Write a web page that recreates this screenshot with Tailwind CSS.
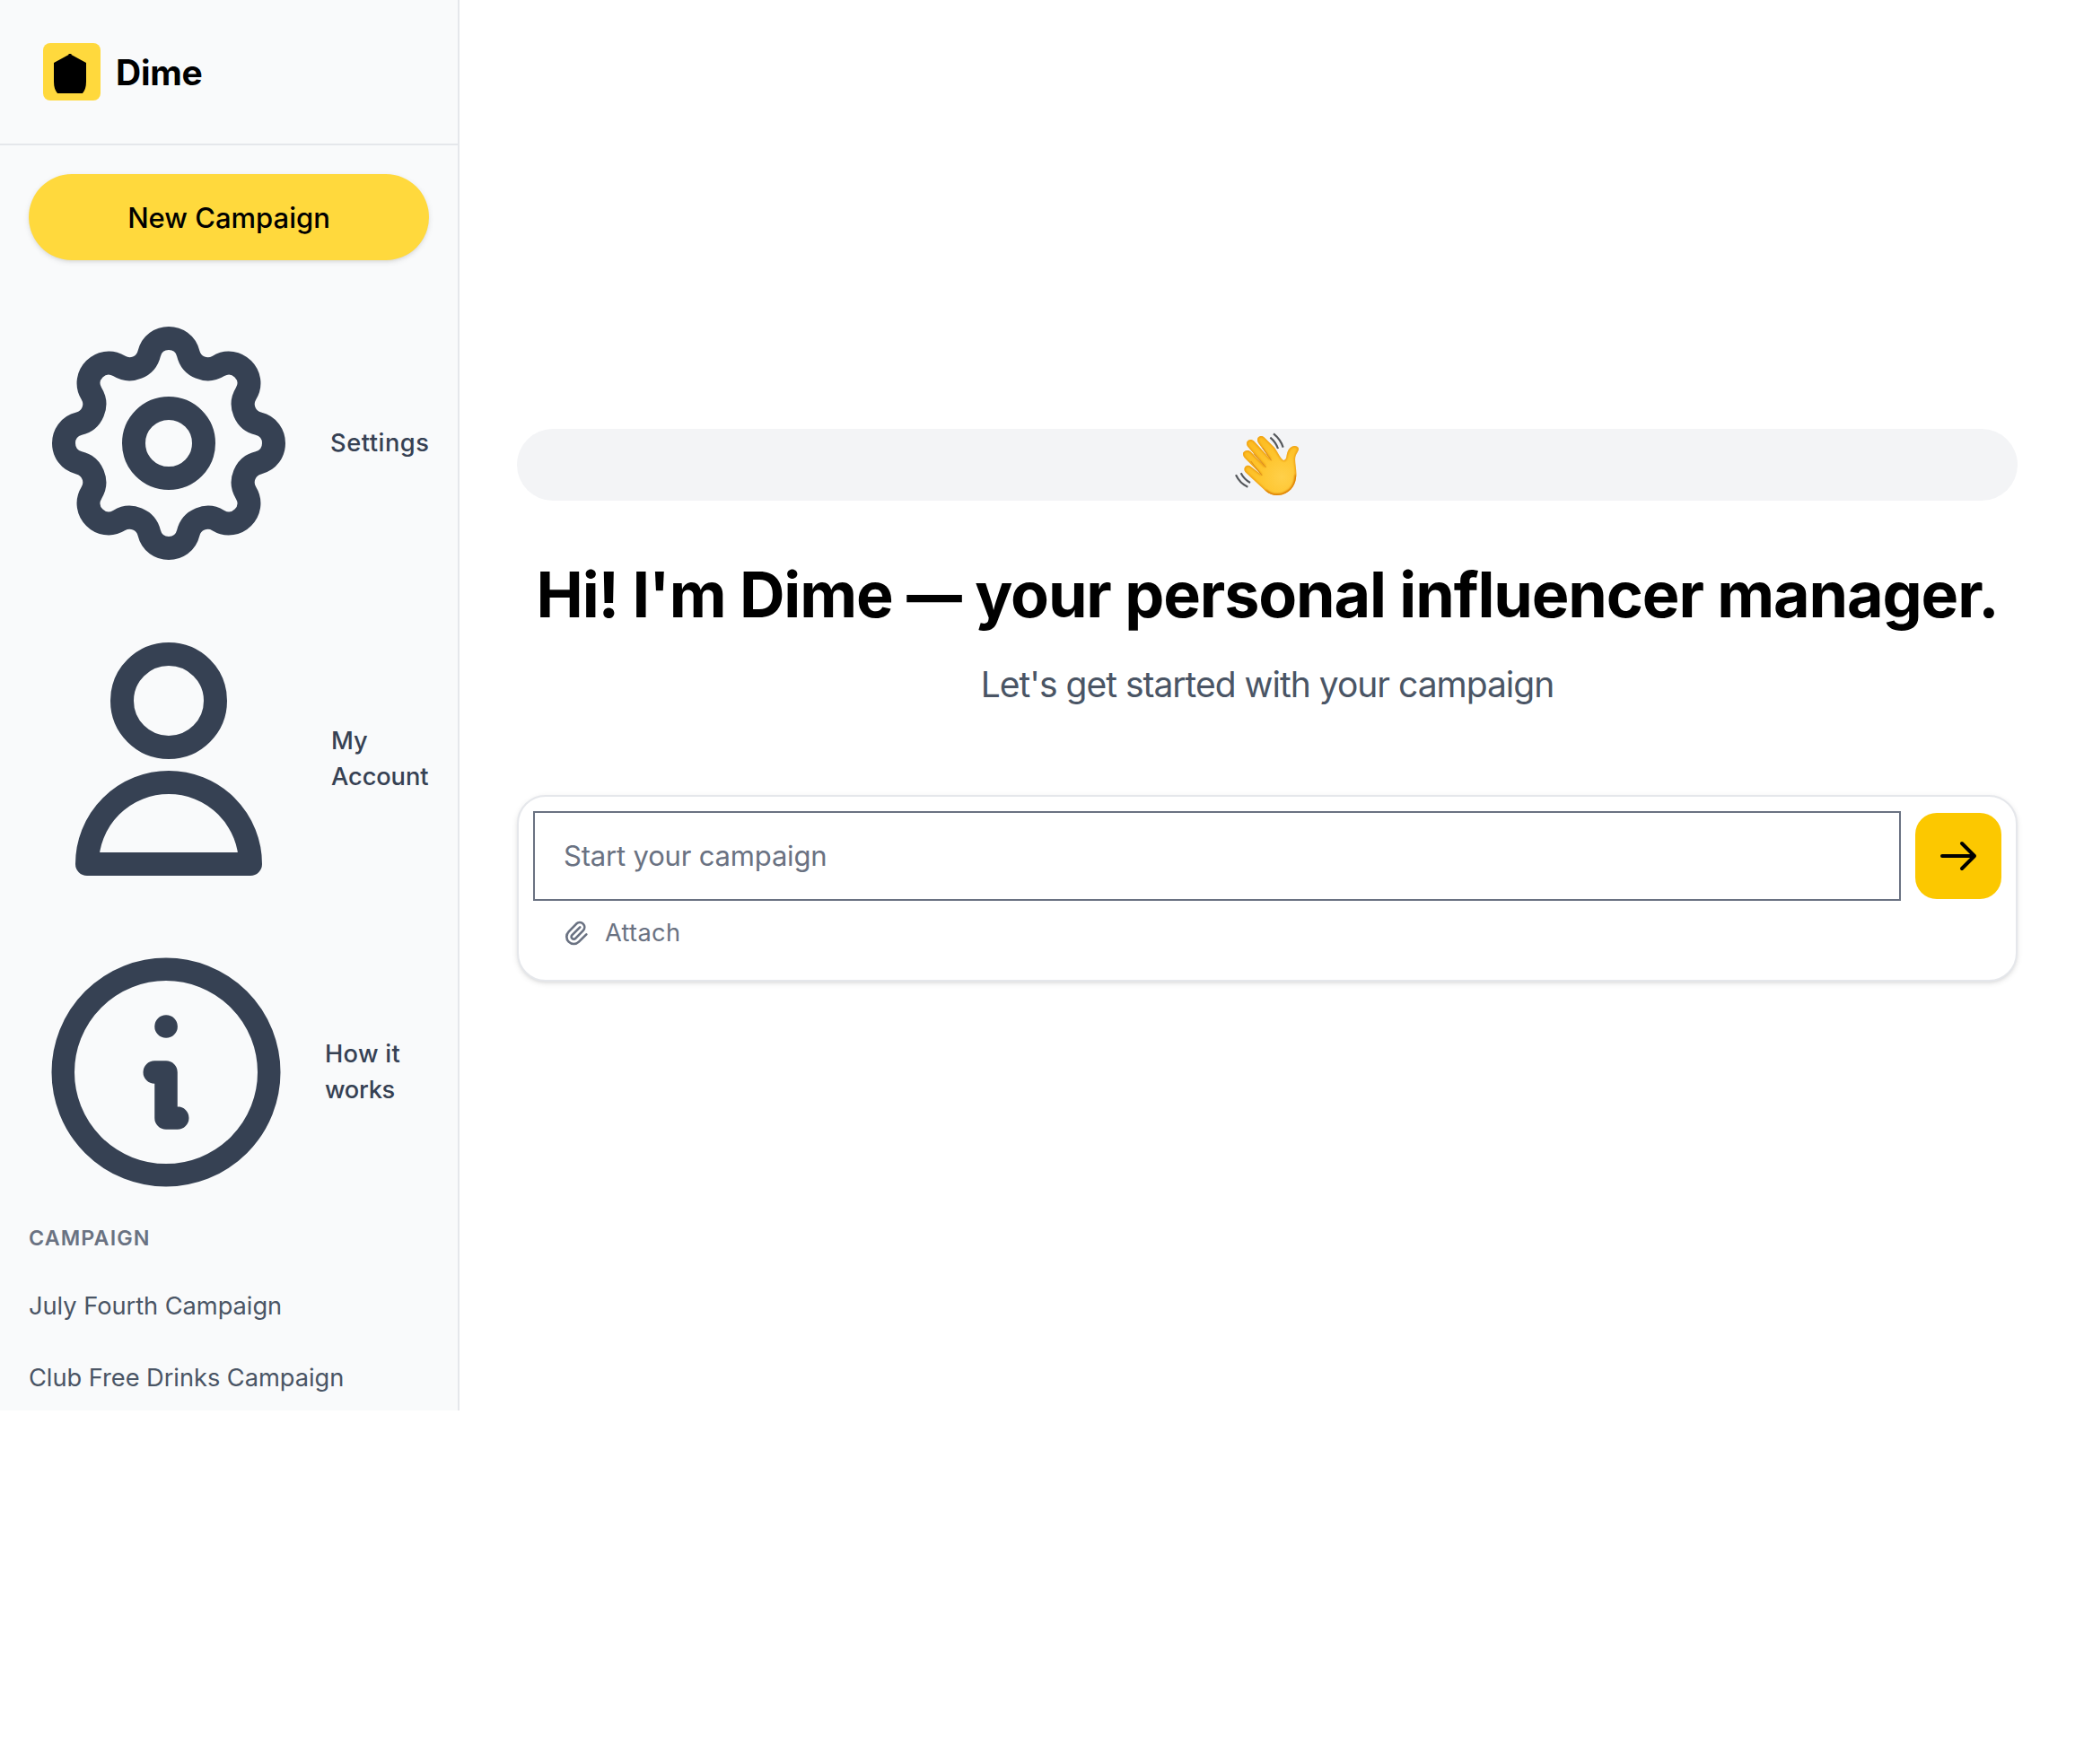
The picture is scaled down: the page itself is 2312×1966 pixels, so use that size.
<!DOCTYPE html>
<html lang="en">
<head>
<meta charset="utf-8">
<title>Dime</title>
<script src="https://cdn.jsdelivr.net/npm/@tailwindcss/browser@4"></script>
</head>
<body class="bg-white font-['Inter',sans-serif] text-black">
<div class="flex h-[1572px]">
  <aside class="flex w-[512px] shrink-0 flex-col border-r-2 border-[#e5e7eb] bg-[#f9fafb]">
    <header class="flex h-[162px] shrink-0 items-center gap-[17px] border-b-2 border-[#e5e7eb] px-12">
      <svg class="size-16 shrink-0" viewBox="0 0 64 64">
        <rect width="64" height="64" rx="8" fill="#ffd93d"/>
        <path d="M28.5 12h3v1L48 22v21c0 6-1.500 10-4 13H16c-2.500-3-4-7-4-13V22l16.500-9z" fill="#000"/>
      </svg>
      <span class="pt-0.5 text-[39px] leading-[56px] font-bold tracking-[-0.27px]">Dime</span>
    </header>

    <div class="flex flex-col px-8 pt-8">
      <button class="h-24 w-full rounded-full bg-[#ffd93d] pt-px text-[31px] leading-[48px] font-medium shadow-[0_2px_6px_rgba(0,0,0,0.1),0_2px_4px_-2px_rgba(0,0,0,0.1)]">New Campaign</button>

      <nav class="mt-12 flex flex-col gap-10 text-[27.25px] leading-10 font-medium text-[#364153]">
        <a class="flex items-center gap-6">
          <svg class="size-[312px] shrink-0" viewBox="0 0 24 24" fill="none" stroke="currentColor" stroke-width="2" stroke-linecap="round" stroke-linejoin="round">
            <path d="M10.325 4.317c.426-1.756 2.924-1.756 3.35 0a1.724 1.724 0 002.573 1.066c1.543-.94 3.310.826 2.370 2.370a1.724 1.724 0 001.065 2.572c1.756.426 1.756 2.924 0 3.350a1.724 1.724 0 00-1.066 2.573c.94 1.543-.826 3.310-2.370 2.370a1.724 1.724 0 00-2.572 1.065c-.426 1.756-2.924 1.756-3.350 0a1.724 1.724 0 00-2.573-1.066c-1.543.94-3.310-.826-2.370-2.370a1.724 1.724 0 00-1.065-2.572c-1.756-.426-1.756-2.924 0-3.350a1.724 1.724 0 001.066-2.573c-.94-1.543.826-3.310 2.370-2.370.996.608 2.296.07 2.572-1.065z"/>
            <path d="M15 12a3 3 0 11-6 0 3 3 0 016 0z"/>
          </svg>
          <span class="tracking-[0.53px]">Settings</span>
        </a>
        <a class="flex items-center gap-6">
          <svg class="size-[312px] shrink-0" viewBox="0 0 24 24" fill="none" stroke="currentColor" stroke-width="2" stroke-linecap="round" stroke-linejoin="round">
            <path d="M16 7a4 4 0 11-8 0 4 4 0 018 0zM12 14a7 7 0 00-7 7h14a7 7 0 00-7-7z"/>
          </svg>
          <span class="pl-px tracking-[-0.1px]">My<br>Account</span>
        </a>
        <a class="flex items-center gap-6">
          <svg class="size-[306px] shrink-0" viewBox="0 0 24 24" fill="none" stroke="currentColor" stroke-width="2" stroke-linecap="round" stroke-linejoin="round">
            <path d="M13 16h-1v-4h-1m1-4h.01M21 12a9 9 0 11-18 0 9 9 0 0118 0z"/>
          </svg>
          <span><span class="tracking-[0.3px]">How it</span><br><span class="tracking-[-0.3px]">works</span></span>
        </a>
      </nav>

      <h2 class="mt-4 text-[23.3px] leading-8 font-semibold tracking-[1.1px] text-[#6a7282]">CAMPAIGN</h2>
      <ul class="mt-10 flex flex-col gap-10 text-[27.25px] leading-10 tracking-[-0.04px] text-[#4a5565]">
        <li>July Fourth Campaign</li>
        <li>Club Free Drinks Campaign</li>
      </ul>
    </div>
  </aside>

  <main class="flex flex-1 flex-col justify-center px-16">
    <div class="flex h-20 items-center justify-center rounded-full bg-[#f3f4f6]">
      <svg class="h-20 w-[90px]" viewBox="21 24 270 240" fill="none">
        <defs>
          <radialGradient id="skin" gradientUnits="userSpaceOnUse" cx="205" cy="185" r="150">
            <stop offset="0" stop-color="#ffd04a"/>
            <stop offset="0.5" stop-color="#fec52e"/>
            <stop offset="1" stop-color="#fdbc22"/>
          </radialGradient>
          <filter id="soft" x="-20%" y="-20%" width="140%" height="140%"><feGaussianBlur stdDeviation="3"/></filter>
          <path id="hand" d="M82 151C77 158 79 166 86 172L150 231C166 246 186 249 206 244C238 234 252 208 253 178C254 155 247 135 250 118C252 108 262 97 261 90C258 80 245 79 236 85C224 93 222 106 220 118C218 128 212 131 207 127C198 118 190 100 180 86L147 53C141 46 130 46 125 53C121 59 123 66 127 72L167 126L112 65C105 58 94 58 89 66C85 72 88 80 92 85L149 150L100 100C92 93 80 95 76 103C73 110 77 118 83 124L136 177L101 150C95 145 87 145 82 151Z"/>
          <clipPath id="inside"><use href="#hand"/></clipPath>
        </defs>
        <use href="#hand" fill="url(#skin)"/>
        <g clip-path="url(#inside)">
          <use href="#hand" stroke="#e9950f" stroke-width="6" filter="url(#soft)"/>
          <path d="M150 231C166 246 186 249 206 244C238 234 252 208 253 178" stroke="#d97706" stroke-width="9" filter="url(#soft)"/>
        </g>
        <path d="M141 88L169 129M112 108L151 152M102 133L138 179" stroke="#d98a1c" stroke-width="3" stroke-linecap="round"/>
        <path d="M166 53C178 63 187 76 192 90M177 40C193 53 204 69 209 86M68 172C75 186 86 197 99 204M51 178C60 197 74 211 91 218" stroke="#55585c" stroke-width="6.500"/>
      </svg>
    </div>
    <h1 class="mt-16 h-20 pt-px text-center text-[70px] leading-[80px] font-bold tracking-[-1.12px] whitespace-nowrap">Hi! I'm Dime <span class="inline-block origin-center scale-x-[0.88] -mx-1">—</span> your personal influencer manager.</h1>
    <p class="mt-8 h-14 pt-px text-center text-[39px] leading-[56px] tracking-[-1px] text-[#4a5565]">Let's get started with your campaign</p>

    <section class="mt-24 h-[208px] rounded-[32px] border-2 border-[#e5e7eb] bg-white px-4 pt-[18px] shadow-[0_2px_6px_rgba(0,0,0,0.1),0_2px_4px_-2px_rgba(0,0,0,0.1)]">
      <div class="flex items-center gap-4">
        <div class="-my-0.5 flex h-[100px] flex-1 items-center border-2 border-[#6a7282] px-8 text-[31px] leading-[48px] tracking-[-0.18px] text-[#6a7282]">Start your campaign</div>
        <button class="flex size-24 items-center justify-center rounded-3xl bg-[#fcc800]">
          <svg class="size-12" viewBox="0 0 24 24" fill="none" stroke="currentColor" stroke-width="2" stroke-linecap="round" stroke-linejoin="round"><path d="M14 5l7 7m0 0l-7 7m7-7H3"/></svg>
        </button>
      </div>
      <div class="mt-[18px] flex items-center gap-4 px-8 text-[27.25px] leading-10 tracking-[0.3px] text-[#6a7282]">
        <svg class="size-8" viewBox="0 0 24 24" fill="none" stroke="currentColor" stroke-width="2" stroke-linecap="round" stroke-linejoin="round"><path d="M15.172 7l-6.586 6.586a2 2 0 102.828 2.828l6.414-6.586a4 4 0 00-5.656-5.656l-6.415 6.585a6 6 0 108.486 8.486L20.500 13"/></svg>
        <span>Attach</span>
      </div>
    </section>
  </main>
</div>
</body>
</html>
